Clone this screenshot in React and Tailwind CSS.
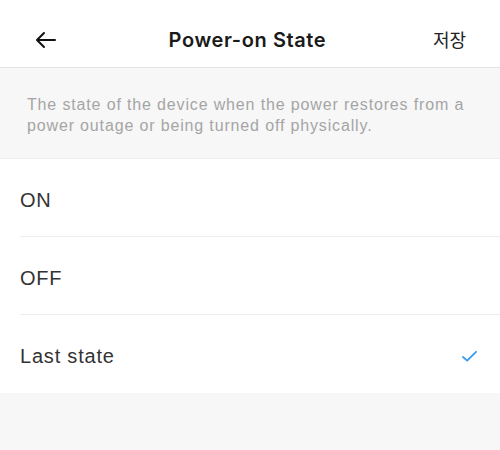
export default function App() {
  const options = [
    { label: 'ON', selected: false },
    { label: 'OFF', selected: false },
    { label: 'Last state', selected: true },
  ];

  return (
    <div
      className="w-[500px] h-[450px] bg-[#f7f7f7] flex flex-col"
      style={{ fontFamily: '"Liberation Sans", "Noto Sans CJK KR", sans-serif' }}
    >
      {/* header */}
      <div className="h-[68px] bg-white border-b border-[#e4e4e4] flex items-center px-[34px] pt-[12px]">
        <svg width="24" height="24" viewBox="0 0 24 24" fill="none" stroke="#111" strokeWidth="2" strokeLinecap="round" strokeLinejoin="round">
          <path d="M21 12H4" />
          <path d="M10 5l-7 7 7 7" />
        </svg>
        <div
          className="flex-1 text-center text-[20px] font-semibold text-[#1a1a1a] tracking-[0.6px] pl-[4px]"
          style={{ fontFamily: 'Inter, "Liberation Sans", sans-serif' }}
        >
          Power-on State
        </div>
        <div className="text-[18px] text-[#222]" style={{ fontFamily: '"Noto Sans CJK KR", sans-serif' }}>저장</div>
      </div>

      {/* description */}
      <div className="h-[91px] px-[27px] pt-[26px] text-[16px] leading-[21px] text-[#a5a5a5] tracking-[0.85px] border-b border-[#eeeeee]">
        The state of the device when the power restores from a power outage or being turned off physically.
      </div>

      {/* options */}
      <div className="bg-white pl-[20px]">
        {options.map((o, i) => (
          <div
            key={o.label}
            className={`h-[78px] flex items-center pr-[22px] pt-[4px] ${i < options.length - 1 ? 'border-b border-[#ececec]' : ''}`}
          >
            <span className="flex-1 text-[20px] text-[#333] tracking-[0.8px]">{o.label}</span>
            {o.selected && (
              <svg width="17" height="13" viewBox="0 0 18 14" fill="none" stroke="#3a9bef" strokeWidth="2" strokeLinecap="round" strokeLinejoin="round">
                <path d="M2 7.5l4.5 4L16 2" />
              </svg>
            )}
          </div>
        ))}
      </div>
    </div>
  );
}
